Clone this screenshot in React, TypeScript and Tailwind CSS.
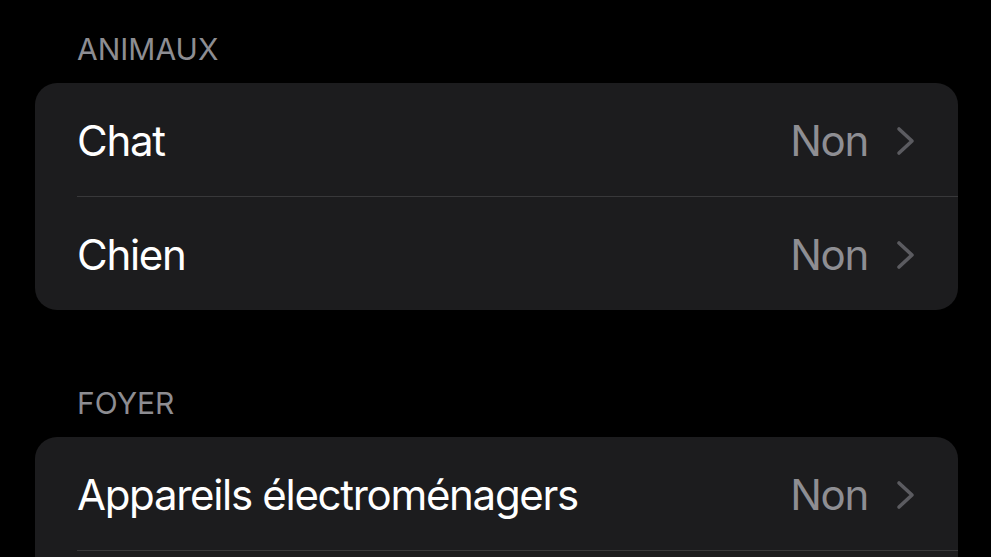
import React from "react";

const Chevron = () => (
  <svg width="20" height="30" viewBox="0 0 20 30" fill="none" className="shrink-0">
    <polyline points="3,3 16,15 3,27" stroke="#5b5b60" strokeWidth="3.6" strokeLinecap="round" strokeLinejoin="round" />
  </svg>
);

const Row = ({ label, value, divider }: { label: string; value: string; divider?: boolean }) => (
  <div className="pl-[42px]">
    <div
      className={`flex items-center pr-[42px] pt-[2px] ${divider ? "h-[114px] border-b border-[#38383a]" : "h-[113px]"}`}
    >
      <span className="flex-1 text-[42px] tracking-[-1.3px] text-white">{label}</span>
      <span className="text-[42px] tracking-[-1.3px] text-[#8e8e93] mr-[28px]">{value}</span>
      <Chevron />
    </div>
  </div>
);

const Header = ({ children }: { children: React.ReactNode }) => (
  <div className="pl-[42px] h-[36px] leading-[36px] text-[30px] tracking-[0px] text-[#8d8d92] mb-[16px]">{children}</div>
);

export default function App() {
  return (
    <div
      className="w-[991px] h-[557px] overflow-hidden bg-black pl-[35px] pr-[33px] pt-[31px]"
      style={{ fontFamily: "Inter, 'Noto Sans', sans-serif" }}
    >
      <Header>ANIMAUX</Header>
      <div className="rounded-[22px] bg-[#1c1c1e] overflow-hidden">
        <Row label="Chat" value="Non" divider />
        <Row label="Chien" value="Non" />
      </div>
      <div className="h-[75px]" />
      <Header>FOYER</Header>
      <div className="rounded-[22px] bg-[#1c1c1e] overflow-hidden">
        <Row label="Appareils électroménagers" value="Non" divider />
        <div className="h-[113px]" />
      </div>
    </div>
  );
}
